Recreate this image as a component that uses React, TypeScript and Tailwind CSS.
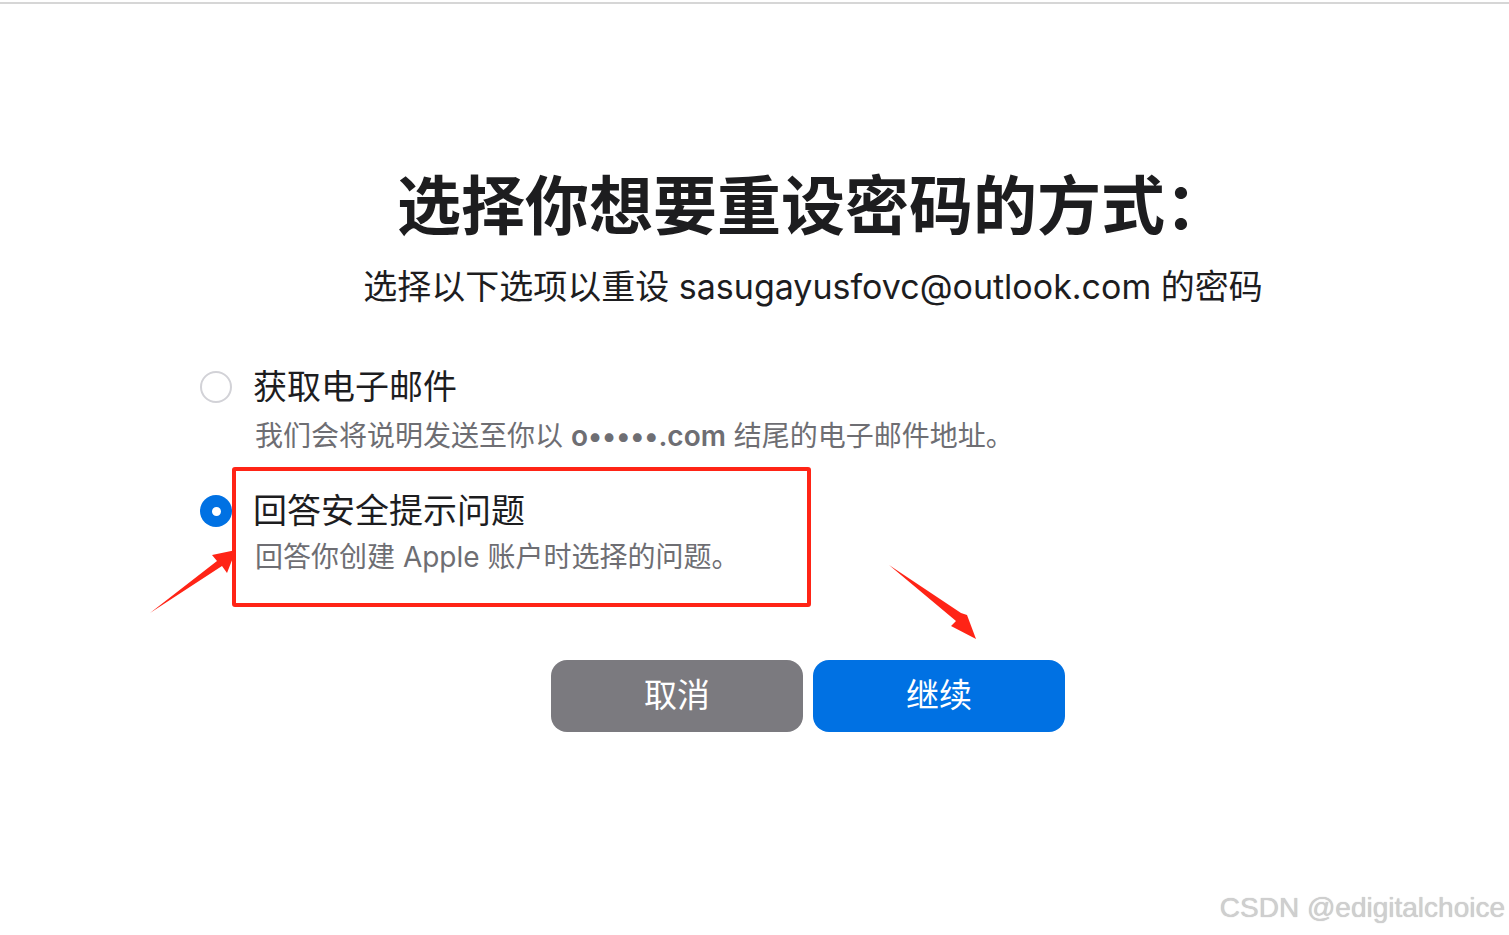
import React from "react";

const font = { fontFamily: '"Inter", "Noto Sans CJK SC", sans-serif' };

function Radio({ checked }: { checked: boolean }) {
  return checked ? (
    <span className="flex h-[32px] w-[32px] shrink-0 items-center justify-center rounded-full bg-[#0071e3]">
      <span className="h-[9px] w-[9px] rounded-full bg-white" />
    </span>
  ) : (
    <span className="h-[32px] w-[32px] shrink-0 rounded-full border-2 border-[#d2d2d7] bg-white" />
  );
}

function Option({
  checked,
  title,
  desc,
  className,
  descClass,
}: {
  checked: boolean;
  title: string;
  desc: React.ReactNode;
  className?: string;
  descClass: string;
}) {
  return (
    <div className={className}>
      <div className="flex items-center gap-[21px]">
        <Radio checked={checked} />
        <span className="text-[34px] leading-[40px] text-[#1d1d1f]">{title}</span>
      </div>
      <p className={`ml-[55px] text-[28px] leading-[36px] text-[#6e6e73] ${descClass}`}>{desc}</p>
    </div>
  );
}

export default function App() {
  return (
    <div className="relative h-[935px] w-full overflow-hidden bg-white" style={font}>
      {/* top rule */}
      <div className="mt-[2px] h-[2px] w-full bg-[#d6d6d6]" />

      <div className="ml-[200px] w-[1216px] pt-[164px]">
        <h1 className="pl-[10px] text-center text-[64px] font-bold leading-[76px] text-[#1d1d1f]">
          选择你想要重设密码的方式：
        </h1>
        <p className="mt-[23px] pl-[10px] text-center text-[34px] leading-[40px] text-[#1d1d1f]">
          选择以下选项以重设 sasugayusfovc@outlook.com 的密码
        </p>

        <Option
          className="mt-[60px]"
          descClass="mt-[11px]"
          checked={false}
          title="获取电子邮件"
          desc={
            <>
              我们会将说明发送至你以 <span className="font-semibold">o•••••.com</span> 结尾的电子邮件地址。
            </>
          }
        />
        <Option
          className="mt-[37px]"
          descClass="mt-[8px]"
          checked
          title="回答安全提示问题"
          desc="回答你创建 Apple 账户时选择的问题。"
        />

        <div className="mt-[85px] flex justify-center gap-[10px]">
          <button className="h-[72px] w-[252px] rounded-[16px] bg-[#7b7a7f] text-[33px] text-white">
            取消
          </button>
          <button className="h-[72px] w-[252px] rounded-[16px] bg-[#0071e3] text-[33px] text-white">
            继续
          </button>
        </div>
      </div>

      {/* annotations */}
      <div className="absolute left-[232px] top-[467px] h-[140px] w-[579px] rounded-[3px] border-[4px] border-[#ff2416]" />
      <svg className="absolute left-0 top-0" width="1509" height="935" viewBox="0 0 1509 935">
        <polygon points="150,613 217,561 212,555 236,550 227,573 222,566" fill="#ff2416" />
        <polygon points="889,565 956,621 951,626 976,639 967,615 961,613" fill="#ff2416" />
      </svg>

      <div
        className="absolute right-[4px] top-[890px] text-[28px] leading-[36px] text-[#cfcfcf]"
        style={{ fontFamily: '"Liberation Sans", sans-serif', textShadow: "0 0 1px #bbb" }}
      >
        CSDN @edigitalchoice
      </div>
    </div>
  );
}
